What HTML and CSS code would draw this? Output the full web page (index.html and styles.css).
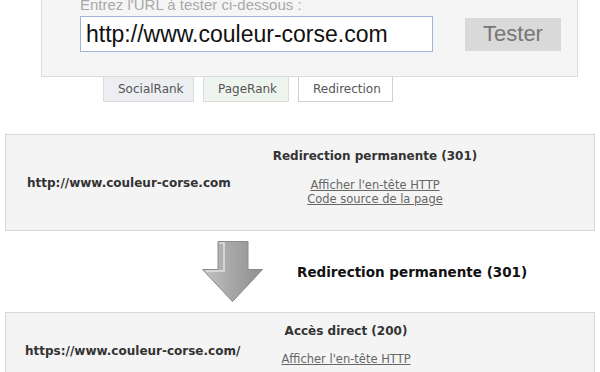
FILE: index.html
```html
<!DOCTYPE html>
<html lang="fr">
<head>
    <meta charset="UTF-8">
    <meta name="viewport" content="width=device-width, initial-scale=1.0">
    <title>Test de redirection</title>
    <link rel="stylesheet" href="styles.css">
</head>
<body>
    <div class="search-panel">
        <label for="url" class="search-label">Entrez l'URL à tester ci-dessous :</label>
        <div class="search-row">
            <input type="text" id="url" class="search-input" value="http://www.couleur-corse.com">
            <button class="search-button">Tester</button>
        </div>
    </div>
    <div class="tabs">
        <span class="tab tab-social">SocialRank</span>
        <span class="tab tab-page">PageRank</span>
        <span class="tab tab-active">Redirection</span>
    </div>

    <div class="result result-first">
        <div class="result-url">http://www.couleur-corse.com</div>
        <div class="result-info">
            <div class="result-status">Redirection permanente (301)</div>
            <a href="#" class="result-link">Afficher l'en-tête HTTP</a>
            <a href="#" class="result-link">Code source de la page</a>
        </div>
    </div>

    <div class="step">
        <svg class="step-arrow" width="61" height="61" viewBox="0 0 61 61">
            <defs>
                <linearGradient id="arrowFill" x1="0" y1="0" x2="1" y2="0">
                    <stop offset="0" stop-color="#c4c4c4"/>
                    <stop offset="0.5" stop-color="#a6a6a6"/>
                    <stop offset="1" stop-color="#909090"/>
                </linearGradient>
            </defs>
            <path d="M16 0.5 H46 V28.5 H60.5 L30.5 60.5 L0.5 28.5 H16 Z" fill="url(#arrowFill)" stroke="#8a8a8a" stroke-width="1"/>
            <path d="M17.5 2 H22 V30 H4" fill="none" stroke="#e2e2e2" stroke-width="1.5"/>
        </svg>
        <span class="step-label">Redirection permanente (301)</span>
    </div>

    <div class="result result-second">
        <div class="result-url">https://www.couleur-corse.com/</div>
        <div class="result-info">
            <div class="result-status">Accès direct (200)</div>
            <a href="#" class="result-link">Afficher l'en-tête HTTP</a>
        </div>
    </div>
</body>
</html>
```

FILE: styles.css
```css
body {
    margin: 0;
    font-family: "DejaVu Sans", Verdana, sans-serif;
    font-size: 12px;
    color: #333;
    background: #fff;
    overflow: hidden;
}
.search-panel {
    width: 537px;
    margin: -4px 0 0 41px;
    padding: 0 0 24px 38px;
    box-sizing: border-box;
    background: #f5f5f5;
    border: 1px solid #dcdcdc;
    border-top: none;
}
.search-label {
    display: block;
    font-family: "Liberation Sans", Arial, sans-serif;
    font-size: 15px;
    line-height: 18px;
    color: #a9a9a9;
    padding-bottom: 2px;
}
.search-row {
    display: flex;
    align-items: center;
}
.search-input {
    width: 353px;
    height: 36px;
    box-sizing: border-box;
    border: 1px solid #9fb6da;
    padding: 0 5px;
    font-family: "Liberation Sans", Arial, sans-serif;
    font-size: 23px;
    color: #111;
    background: #fff;
    outline: none;
}
.search-button {
    width: 96px;
    height: 33px;
    margin-left: 32px;
    border: none;
    background: #d9d9d9;
    font-family: "Liberation Sans", Arial, sans-serif;
    font-size: 22px;
    color: #777;
    padding: 0;
}
.tabs {
    display: flex;
    margin-left: 103px;
    gap: 9px;
}
.tab {
    display: block;
    height: 25px;
    line-height: 24px;
    box-sizing: border-box;
    padding: 0 14px;
    border: 1px solid #dcdcdc;
    border-top: none;
    color: #555;
    font-size: 12px;
}
.tab-social {
    width: 91px;
    background: #eceef2;
}
.tab-page {
    width: 86px;
    background: #eef5ee;
}
.tab-active {
    width: 95px;
    background: #fff;
    border-color: #d0d0d0;
}
.result {
    display: flex;
    align-items: center;
    margin: 0 5px;
    background: #f4f4f4;
    border: 1px solid #d8d8d8;
    padding: 14px 0 24px;
}
.result-first {
    margin-top: 32px;
}
.result-second {
    margin-top: 10px;
    padding-top: 11px;
}
.result-url {
    box-sizing: border-box;
    font-weight: bold;
    font-size: 12px;
    margin-top: 11px;
}
.result-first .result-url {
    width: 239px;
    padding-left: 21px;
}
.result-second .result-url {
    width: 240px;
    padding-left: 19px;
}
.result-info {
    display: flex;
    flex-direction: column;
    align-items: center;
    text-align: center;
}
.result-first .result-info {
    width: 260px;
}
.result-second .result-info {
    width: 200px;
}
.result-status {
    font-weight: bold;
    line-height: 15px;
    margin-bottom: 14px;
}
.result-second .result-status {
    margin-bottom: 13px;
}
.result-link {
    color: #666;
    font-size: 11.5px;
    line-height: 14px;
    text-decoration: underline;
}
.step {
    display: flex;
    align-items: center;
    margin: 10px 0 0 202px;
}
.step-arrow {
    display: block;
}
.step-label {
    margin-left: 34px;
    font-size: 13.5px;
    font-weight: bold;
    color: #111;
}
```
